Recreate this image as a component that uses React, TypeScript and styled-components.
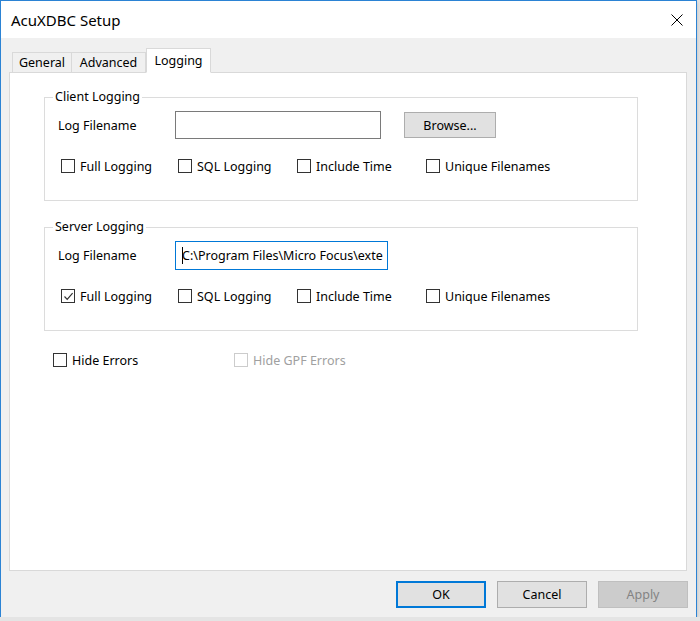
import React from 'react';
import styled, { createGlobalStyle } from 'styled-components';

const GlobalStyle = createGlobalStyle`
    html, body {
        margin: 0;
        padding: 0;
        background: #e4e4e4;
    }
    body {
        font-family: "Noto Sans", "Open Sans", sans-serif;
        font-size: 12px;
        color: #000;
    }
`;

const tabs = ['General', 'Advanced', 'Logging'];
const tabWidths = [60, 74, 65];

const options = ['Full Logging', 'SQL Logging', 'Include Time', 'Unique Filenames'];

type CheckProps = { label: string; checked?: boolean; disabled?: boolean };

const Check = ({ label, checked, disabled }: CheckProps) => (
    <CheckItem $disabled={disabled}>
        <Box $disabled={disabled}>
            {checked && (
                <svg width="11" height="11" viewBox="0 0 11 11">
                    <path d="M1.5 5.5 L4.2 8.3 L9.6 2.2" fill="none" stroke="#333" strokeWidth="1.2" />
                </svg>
            )}
        </Box>
        <span>{label}</span>
    </CheckItem>
);

type GroupProps = { title: string; value?: string; focused?: boolean; browse?: boolean; full?: boolean };

const LogGroup = ({ title, value, focused, browse, full }: GroupProps) => (
    <Group $tall={focused}>
        <Caption>{title}</Caption>
        <FileRow>
            <FieldLabel>Log Filename</FieldLabel>
            <TextBox $focused={focused} $width={focused ? 213 : 206}>
                {focused && <Caret />}
                {value}
            </TextBox>
            {browse && <SmallButton>Browse...</SmallButton>}
        </FileRow>
        <CheckRow>
            {options.map((o, i) => (
                <Check key={o} label={o} checked={full && i === 0} />
            ))}
        </CheckRow>
    </Group>
);

const App = () => {
    return (
        <>
            <GlobalStyle />
            <Window>
                <TitleBar>
                    <Title>AcuXDBC Setup</Title>
                    <Close>
                        <svg width="12" height="12" viewBox="0 0 12 12">
                            <path d="M0.5 0.5 L11.5 11.5 M11.5 0.5 L0.5 11.5" stroke="#000" strokeWidth="1" />
                        </svg>
                    </Close>
                </TitleBar>
                <Body>
                    <TabBar>
                        {tabs.map((t, i) => (
                            <Tab key={t} $active={i === 2} $width={tabWidths[i]}>
                                {t}
                            </Tab>
                        ))}
                    </TabBar>
                    <Panel>
                        <LogGroup title="Client Logging" browse />
                        <LogGroup
                            title="Server Logging"
                            value="C:\Program Files\Micro Focus\exte"
                            focused
                            full
                        />
                        <HideRow>
                            <Check label="Hide Errors" />
                            <Check label="Hide GPF Errors" disabled />
                        </HideRow>
                    </Panel>
                    <Footer>
                        <DialogButton $default>OK</DialogButton>
                        <DialogButton>Cancel</DialogButton>
                        <DialogButton disabled>Apply</DialogButton>
                    </Footer>
                </Body>
            </Window>
        </>
    );
};

const Window = styled.div`
    display: flex;
    flex-direction: column;
    width: 697px;
    height: 617px;
    box-sizing: border-box;
    border: 1px solid #2b83d4;
    border-bottom: none;
    background: #f0f0f0;
    box-shadow: 0 2px 4px rgba(0, 0, 0, 0.18);
`;

const TitleBar = styled.div`
    display: flex;
    align-items: center;
    justify-content: space-between;
    height: 37px;
    background: #fff;
    padding: 0 13px 0 10px;
`;

const Title = styled.span`
    font-size: 15px;
`;

const Close = styled.span`
    display: flex;
    margin-top: 1px;
`;

const Body = styled.div`
    flex: 1;
    display: flex;
    flex-direction: column;
    padding: 10px 9px 0 8px;
`;

const TabBar = styled.div`
    display: flex;
    align-items: flex-end;
    height: 25px;
    padding-left: 3px;
    margin-bottom: -1px;
    position: relative;
    z-index: 1;
`;

const Tab = styled.div<{ $active?: boolean; $width: number }>`
    box-sizing: border-box;
    width: ${p => p.$width}px;
    height: ${p => (p.$active ? 25 : 21)}px;
    border: 1px solid #d9d9d9;
    border-bottom-color: ${p => (p.$active ? '#fff' : '#d9d9d9')};
    border-left-width: ${p => (p.$active ? 1 : 0)}px;
    background: ${p => (p.$active ? '#fff' : '#f0f0f0')};
    display: flex;
    align-items: ${p => (p.$active ? 'flex-start' : 'center')};
    justify-content: center;
    padding-top: ${p => (p.$active ? 3 : 0)}px;
    font-size: 12.5px;
    &:first-child {
        border-left-width: 1px;
    }
`;

const Panel = styled.div`
    flex: 1;
    background: #fff;
    border: 1px solid #d9d9d9;
    padding: 24px 0 0 34px;
    display: flex;
    flex-direction: column;
    gap: 26px;
`;

const Group = styled.div<{ $tall?: boolean }>`
    position: relative;
    width: 594px;
    box-sizing: border-box;
    border: 1px solid #dcdcdc;
    padding: 13px 0 ${p => (p.$tall ? 25 : 25)}px 13px;
`;

const Caption = styled.span`
    position: absolute;
    top: -10px;
    left: 8px;
    padding: 0 2px;
    background: #fff;
    font-size: 12.5px;
`;

const FileRow = styled.div`
    display: flex;
    align-items: center;
    height: 28px;
    margin-bottom: 18px;
`;

const FieldLabel = styled.span`
    width: 117px;
    font-size: 12.5px;
`;

const TextBox = styled.div<{ $focused?: boolean; $width: number }>`
    position: relative;
    box-sizing: border-box;
    width: ${p => p.$width}px;
    height: ${p => (p.$focused ? 29 : 28)}px;
    border: 1px solid ${p => (p.$focused ? '#0078d7' : '#7a7a7a')};
    padding: 0 0 0 6px;
    display: flex;
    align-items: center;
    white-space: nowrap;
    overflow: hidden;
    font-size: 12.5px;
`;

const Caret = styled.span`
    display: inline-block;
    width: 1px;
    height: 17px;
    background: #000;
    margin-right: -1px;
    flex-shrink: 0;
`;

const SmallButton = styled.div`
    box-sizing: border-box;
    width: 92px;
    height: 26px;
    margin-left: 23px;
    background: #e1e1e1;
    border: 1px solid #adadad;
    display: flex;
    align-items: center;
    justify-content: center;
    font-size: 12.5px;
`;

const CheckRow = styled.div`
    display: grid;
    grid-template-columns: 117px 119px 129px auto;
    padding-left: 3px;
    height: 18px;
    align-items: center;
`;

const CheckItem = styled.div<{ $disabled?: boolean }>`
    display: flex;
    align-items: center;
    gap: 5px;
    font-size: 12.5px;
    color: ${p => (p.$disabled ? '#a0a0a0' : '#000')};
`;

const Box = styled.span<{ $disabled?: boolean }>`
    box-sizing: border-box;
    width: 14px;
    height: 14px;
    border: 1px solid ${p => (p.$disabled ? '#cccccc' : '#333')};
    background: #fff;
    display: flex;
    align-items: center;
    justify-content: center;
`;

const HideRow = styled.div`
    display: grid;
    grid-template-columns: 181px auto;
    align-items: center;
    height: 18px;
    margin: -6px 0 0 9px;
`;

const Footer = styled.div`
    display: flex;
    justify-content: flex-end;
    gap: 11px;
    padding: 10px 0 9px;
    margin-right: -1px;
`;

const DialogButton = styled.div<{ $default?: boolean; disabled?: boolean }>`
    box-sizing: border-box;
    width: 90px;
    height: 27px;
    display: flex;
    align-items: center;
    justify-content: center;
    font-size: 12.5px;
    background: ${p => (p.disabled ? '#cccccc' : '#e1e1e1')};
    color: ${p => (p.disabled ? '#838383' : '#000')};
    border: ${p => (p.$default ? '2px solid #0078d7' : p.disabled ? '1px solid #bfbfbf' : '1px solid #adadad')};
`;

export default App;
